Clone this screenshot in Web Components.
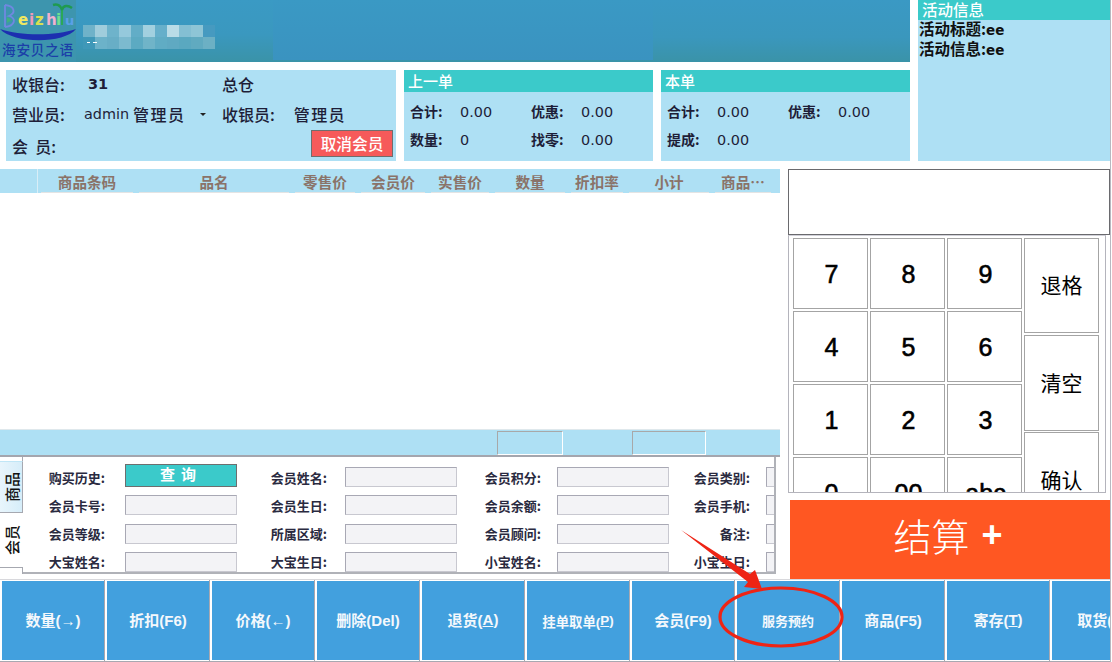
<!DOCTYPE html>
<html lang="zh">
<head>
<meta charset="utf-8">
<title>POS</title>
<style>
html,body{margin:0;padding:0;background:#fff;overflow:hidden}
body{width:1112px;height:662px;font-family:"DejaVu Sans","Noto Sans CJK SC",sans-serif;color:#1e1e38}
</style>
</head>
<body>
<pos-app></pos-app>
<script>
const def=(name,html,init)=>customElements.define(name,class extends HTMLElement{
  constructor(){super();this.attachShadow({mode:'open'}).innerHTML=html;}
  connectedCallback(){if(init)init.call(this,this.shadowRoot);}
});
const LIGHT='#aee0f4',TEAL='#3bcaca';

def('pos-banner',`<style>
:host{display:flex;height:62px;background:linear-gradient(#3a9ac4 0%,#3a98bf 55%,#3a93a8 100%)}
.logo{width:76px;flex:none}
.mosaicwrap{width:197px;flex:none;position:relative}
.mosaic{display:grid;grid-template-columns:repeat(11,12px);grid-auto-rows:12px;margin:25px 0 0 7px;width:132px}
.dash{position:absolute;top:42px;height:1px;background:#fff}
.mid{width:380px;height:60px;background:linear-gradient(#3a99c4,#3a93c0);flex:none}
.end{flex:1;background:linear-gradient(#3a99c4 0%,#3a97bd 60%,#3a93a8 100%)}
svg{display:block}
</style>
<div class="logo"><svg width="76" height="62" viewBox="0 0 76 62">
<rect width="76" height="62" fill="#3d95ae"/>
<path d="M5 5V27M5 5C15 6 16 13 9 16C17 18 15 26 5 27" stroke="#7088e0" stroke-width="1.8" fill="none"/>
<path d="M7 17l5 3-5 3z" fill="#3fb080"/>
<text x="18" y="25" font-family="DejaVu Sans" font-size="15" fill="#f0e860" font-weight="bold">e</text>
<text x="29" y="25" font-family="DejaVu Sans" font-size="15" fill="#f09ab8" font-weight="bold">i</text>
<text x="35" y="25" font-family="DejaVu Sans" font-size="15" fill="#d8e050" font-weight="bold">z</text>
<text x="46" y="25" font-family="DejaVu Sans" font-size="15" fill="#f0b0d0" font-weight="bold">h</text>
<text x="56" y="25" font-family="DejaVu Sans" font-size="15" fill="#70e090" font-weight="bold">i</text>
<path d="M62 25V9" stroke="#2aa858" stroke-width="2" fill="none"/>
<path d="M62 10C60 4 56 4 53 5M62 10C63 5 68 5 72 8" stroke="#1f9a50" stroke-width="2.4" fill="none"/>
<text x="65" y="25" font-family="DejaVu Sans" font-size="13" fill="#5aa0e8" font-weight="bold">u</text>
<path d="M0 29C20 36 56 36 76 29C64 44 14 44 0 29Z" fill="#1c2fb0"/>
<text x="2" y="55" font-family="Noto Sans CJK SC" font-size="13.6" font-weight="500" fill="#1b3fa8" letter-spacing=".8">海安贝之语</text>
</svg></div>
<div class="mosaicwrap"><div class="mosaic"></div><i class="dash" style="left:11px;width:3px"></i><i class="dash" style="left:17px;width:4px"></i></div>
<div class="mid"></div><div class="end"></div>`,function(r){
  const c=['#6fb2c9','#a0cddc','#6eb3cb','#95c9dc','#62adc7','#a2d0df','#66afca','#b9dce7','#84bfd3','#8ec5d6','#469ac0',
           '#3f98b8','#6cb2c9','#68aec6','#7cbacf','#5caac2','#70b4c8','#60acc4','#5fa9c2','#5aa8c0','#60aac0','#6cb0c4'];
  const m=r.querySelector('.mosaic');
  c.forEach(x=>{const d=document.createElement('div');d.style.background=x;m.append(d);});
});

def('pos-activity',`<style>
:host{display:block;width:192px;height:161px;background:${LIGHT}}
h2{margin:0;height:20px;background:${TEAL};color:#fff;font:500 15.5px/18px "Noto Sans CJK SC",sans-serif;padding-left:4px}
p{margin:0 0 2px 1px;font:700 15.5px/16px "Noto Sans CJK SC",sans-serif;color:#111}
.v{font:700 13.5px/16px "DejaVu Sans",sans-serif}
</style><h2>活动信息</h2><div><p>活动标题:<span class="v">ee</span></p><p>活动信息:<span class="v">ee</span></p></div>`);

def('pos-register',`<style>
:host{display:grid;width:390px;height:91px;background:${LIGHT};box-sizing:border-box;padding-left:6px;
 grid-template-columns:72px 138px 1fr;grid-template-rows:28px 32px 31px;align-items:center;
 font:500 16px "Noto Sans CJK SC",sans-serif;color:#1e1e38}
.n{font:700 14.5px "DejaVu Sans",sans-serif;padding-left:4px}
.sel{display:flex;align-items:center;white-space:nowrap}
.en{font:500 14.4px "DejaVu Sans",sans-serif;margin-right:4px}
.sp{letter-spacing:1.4px}
.car{margin-left:15px;width:0;height:0;border:3px solid transparent;border-top:3px solid #222;border-bottom:0}
.two{display:flex;justify-content:space-between;align-items:center}
.pair{display:flex;gap:19px}
button{all:unset;box-sizing:border-box;width:82px;height:27px;background:#f65a5a;border:1px solid #6e6e6e;color:#fff;text-align:center;
 font:500 15.7px/23px "Noto Sans CJK SC",sans-serif;margin:-5px 3px 0 0}
</style>
<div>收银台:</div><div class="n">31</div><div>总仓</div>
<div>营业员:</div><div class="sel"><span class="en">admin</span><span class="sp">管理员</span><i class="car"></i></div><div class="pair"><span>收银员:</span><span class="sp">管理员</span></div>
<div style="white-space:pre">会&nbsp;&nbsp;员:</div><div></div><div class="two"><span></span><button>取消会员</button></div>`);

def('pos-totals',`<style>
:host{display:block;width:249px;height:91px;background:${LIGHT}}
h2{margin:0;height:22px;background:${TEAL};color:#fff;font:500 15px/21px "Noto Sans CJK SC",sans-serif;padding-left:4px}
.g{display:grid;grid-template-columns:50px 71px 50px 1fr;grid-auto-rows:28px;align-items:center;padding:5px 0 0 6px;
 font:700 14px "Noto Sans CJK SC",sans-serif;color:#1e1e38}
::slotted(b){font:500 14.4px "DejaVu Sans",sans-serif;padding-top:2px}
::slotted(span){font:700 14px "Noto Sans CJK SC",sans-serif}
</style><h2 id="t"></h2><div class="g"><slot></slot></div>`,function(r){r.getElementById('t').textContent=this.getAttribute('title-text');});

def('pos-table',`<style>
:host{display:block;width:780px;height:260px;background:#fff}
.h{display:grid;height:24px;background:${LIGHT};grid-template-columns:38px 98px 156px 66px 70px 64px 76px 58px 86px 62px 6px;
 font:700 14.6px "Noto Sans CJK SC",sans-serif;color:#8a7369}
.h div{display:flex;align-items:center;justify-content:center;margin:0 3px;box-shadow:inset 0 -1px #e4e4e4;white-space:nowrap}
.h div:first-child{margin:0;box-shadow:none;border-right:1px solid #d9eef7}
.h div:last-child{box-shadow:none}
</style><div class="h"><div></div><div>商品条码</div><div>品名</div><div>零售价</div><div>会员价</div><div>实售价</div><div>数量</div><div>折扣率</div><div>小计</div><div>商品…</div><div></div></div>`);

def('pos-tablefoot',`<style>
:host{display:flex;width:780px;height:28px;box-sizing:border-box;background:${LIGHT};border-top:1px solid #dfe8ec;border-bottom:2px solid #a4a6ae;align-items:center}
i{display:block;box-sizing:border-box;height:24px;border:1px solid;border-color:#a8a8a8 #fff #fff #a8a8a8;background:${LIGHT}}
</style><i style="width:66px;margin-left:497px"></i><i style="width:74px;margin-left:69px"></i>`);

def('pos-member',`<style>
:host{display:flex;width:776px;height:117px;overflow:hidden}
.tabs{width:23px;flex:none;box-sizing:border-box;display:flex;flex-direction:column}
.tab{writing-mode:vertical-rl;text-orientation:sideways;display:flex;align-items:center;justify-content:center;font:500 15px/1 "Noto Sans CJK SC",sans-serif;color:#111}
.tab span{display:block;transform:rotate(180deg);white-space:nowrap}
.sp{height:4px;flex:none;box-sizing:border-box;border-right:1px solid #a6a8b0}
.a{height:52px;flex:none;width:23px;box-sizing:border-box;background:linear-gradient(to left,#d6edf9,#e8f5fc);border:solid #a6a8b0;border-width:1px 1px 1px 0;border-top-color:#c0e6f6}
.b{height:54px;flex:none;width:23px}
.rest{border-top:1px solid #a6a8b0;border-right:1px solid #a6a8b0;width:23px;box-sizing:border-box;height:7px;flex:none}
.body{flex:1;min-width:0;background:#fff;box-sizing:border-box;border-right:2px solid #b0b2b8;border-bottom:2px solid #b0b2b8;overflow:hidden}
.g{display:grid;grid-template-columns:82px 132px 90px 130px 84px 128px 81px 128px;grid-template-rows:repeat(4,20px);row-gap:8.3px;padding-top:10px;
 font:700 13px "Noto Sans CJK SC",sans-serif;color:#2a2a40;align-items:center}
.l{text-align:right;white-space:nowrap}
.i{box-sizing:border-box;height:20px;background:#f3f3f6;border:1px solid;border-color:#a8a8b4 #c8c8d0 #c8c8d0 #a8a8b4}
.c2{margin-left:20px;width:112px}.c4{margin-left:18px;width:112px}.c6{margin-left:16px;width:112px}.c8{margin-left:16px;width:112px}
.q{box-sizing:border-box;height:23px;margin-top:-4px;margin-left:20px;width:112px;background:${TEAL};border:1px solid #6e6e6e;color:#fff;text-align:center;font:700 15px/18px "Noto Sans CJK SC",sans-serif;letter-spacing:6px}
</style>
<div class="tabs"><div class="sp"></div><div class="tab a"><span>商品</span></div><div class="tab b"><span>会员</span></div><div class="rest"></div></div>
<div class="body"><div class="g"></div></div>`,function(r){
  const rows=[['购买历史:','会员姓名:','会员积分:','会员类别:'],['会员卡号:','会员生日:','会员余额:','会员手机:'],['会员等级:','所属区域:','会员顾问:','备注:'],['大宝姓名:','大宝生日:','小宝姓名:','小宝生日:']];
  const g=r.querySelector('.g');
  rows.forEach((row,ri)=>row.forEach((t,ci)=>{
    const l=document.createElement('div');l.className='l';l.textContent=t;g.append(l);
    const i=document.createElement('div');
    if(ri==0&&ci==0){i.className='q';i.textContent='查询';}
    else i.className='i c'+(ci*2+2);
    g.append(i);
  }));
});

def('pos-keypad',`<style>
:host{display:flex;gap:2px;width:318px;height:258px;box-sizing:border-box;padding:2px 0 0 4px;overflow:hidden;border:1px solid #b4b4bc;border-top:1px solid #d0d0d8;background:#fff}
.d{display:grid;grid-template-columns:repeat(3,75px);grid-auto-rows:71px;gap:2px;flex:none}
.s{display:flex;flex-direction:column;width:75px;flex:none}
.k{box-sizing:border-box;border:1px solid #a4a4a4;display:flex;align-items:center;justify-content:center;background:#fff;color:#000;flex:none}
.d .k{font:400 25px "Liberation Sans",sans-serif;-webkit-text-stroke:.6px #000;padding:2px 0 0 2px}
.s .k{font:400 21px "Noto Sans CJK SC",sans-serif;padding-bottom:3px}
</style><div class="d"><div class="k">7</div><div class="k">8</div><div class="k">9</div><div class="k">4</div><div class="k">5</div><div class="k">6</div><div class="k">1</div><div class="k">2</div><div class="k">3</div><div class="k">0</div><div class="k">00</div><div class="k">abc</div></div>
<div class="s"><div class="k" style="height:95px;margin-bottom:2px">退格</div><div class="k" style="height:96px;margin-bottom:1px">清空</div><div class="k" style="height:96px">确认</div></div>`);

def('pos-checkout',`<style>
:host{display:flex;align-items:center;justify-content:center;gap:12px;width:320px;height:79px;box-sizing:border-box;padding:0 0 10px 0;background:#ff5722;color:#fff;margin-left:2px;
 font:300 38px "Noto Sans CJK SC",sans-serif}
span{margin-left:-4px}
b{font:700 36px "Liberation Sans",sans-serif}
</style><span>结算</span><b>+</b>`);

def('pos-action',`<style>
:host{display:flex;flex:none;width:102px;height:79px;background:#42a0de;color:#f4f8fc;align-items:center;justify-content:center;white-space:nowrap;margin-right:3px;box-sizing:border-box;padding-bottom:2px;
 font:700 15px "Liberation Sans","Noto Sans CJK SC",sans-serif}
:host([small]){font-size:13px;padding-bottom:0}
:host([mid]){font-size:13.4px;padding-bottom:0}
</style><slot></slot>`);

def('pos-actions',`<style>
:host{display:flex;width:1110px;height:83px;box-sizing:border-box;padding:1px 0 2px 2px;overflow:hidden;position:relative;
 background:linear-gradient(to right,#a8a8b0 1px,#fff 1px) 0 0/105px 100% repeat-x;background-position:104px 0;border-top:1px solid #d8d8dc;border-bottom:1px solid #a8a8b0}
</style><slot></slot>`);

def('pos-annotation',`<style>
:host{position:absolute;left:0;top:0;width:1112px;height:662px;pointer-events:none}
svg{display:block}
</style><svg width="1112" height="662" viewBox="0 0 1112 662">
<path d="M681 530 L750 574 L755 570 L762 589 L744 587 L748 582 Z" fill="#ee2415"/>
<ellipse cx="781" cy="617" rx="61" ry="29" fill="none" stroke="#ee2415" stroke-width="3.2"/>
</svg>`);

def('pos-app',`<style>
:host{display:block;position:relative;width:1112px;height:662px;overflow:hidden;background:#fff}
:host::after{content:"";position:absolute;left:1110px;top:0;width:1px;height:662px;background:#b8b8c0}
.top{display:grid;grid-template-columns:910px 192px;column-gap:8px}
.infos{display:flex;gap:8px;margin:8px 0 0 6px}
.mid{display:grid;grid-template-columns:780px 1fr;column-gap:8px;margin-top:8px;height:410px}
.rt{display:flex;flex-direction:column}
.disp{box-sizing:border-box;width:322px;height:66px;border:1px solid #6a6a6e;background:#fff;flex:none}
.gap{height:7px;flex:none}
</style>
<div class="top">
 <div><pos-banner></pos-banner>
  <div class="infos"><pos-register></pos-register>
   <pos-totals title-text="上一单"><span>合计:</span><b>0.00</b><span>优惠:</span><b>0.00</b><span>数量:</span><b>0</b><span>找零:</span><b>0.00</b></pos-totals>
   <pos-totals title-text="本单"><span>合计:</span><b>0.00</b><span>优惠:</span><b>0.00</b><span>提成:</span><b>0.00</b></pos-totals>
  </div></div>
 <pos-activity></pos-activity>
</div>
<div class="mid">
 <div><pos-table></pos-table><pos-tablefoot></pos-tablefoot><pos-member></pos-member></div>
 <div class="rt"><div class="disp"></div><pos-keypad></pos-keypad><div class="gap"></div><pos-checkout></pos-checkout></div>
</div>
<pos-actions>
 <pos-action>数量(→)</pos-action><pos-action>折扣(F6)</pos-action><pos-action>价格(←)</pos-action><pos-action>删除(Del)</pos-action>
 <pos-action>退货(<u>A</u>)</pos-action><pos-action mid>挂单取单(<u>P</u>)</pos-action><pos-action>会员(F9)</pos-action><pos-action small>服务预约</pos-action>
 <pos-action>商品(F5)</pos-action><pos-action>寄存(<u>T</u>)</pos-action><pos-action>取货(G)</pos-action>
</pos-actions>
<pos-annotation></pos-annotation>`);
</script>
</body>
</html>
